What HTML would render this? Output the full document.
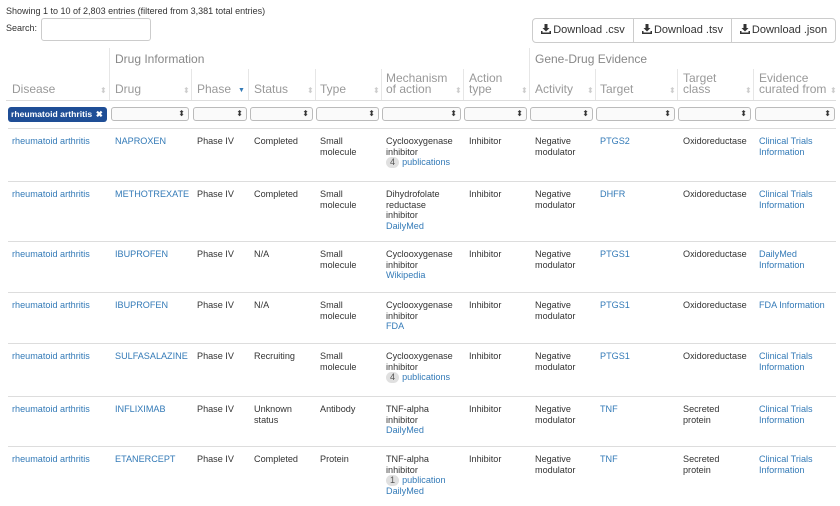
<!DOCTYPE html><html><head><style>
*{margin:0;padding:0;box-sizing:border-box}
body{width:840px;height:503px;overflow:hidden;background:#fff;font-family:"Liberation Sans",sans-serif;color:#333;position:relative;font-size:10px}
.a{position:absolute}
a{color:#337ab7;text-decoration:none}
.row{position:absolute;left:8px;width:828px;border-top:1px solid #ddd}
.c{position:absolute;top:7px;line-height:10.7px;font-size:9.1px;white-space:nowrap}
.h{position:absolute;font-size:12px;color:#999;line-height:11px}
.grp{position:absolute;top:52px;font-size:12px;color:#888}
.vl{position:absolute;width:1px;background:#e6e6e6}
.sel{position:absolute;top:107px;height:14px;border:1px solid #bbb;border-radius:3px;background:#fafafa}
.sel:after{content:"\2B0D";position:absolute;right:3px;top:0px;font-size:8px;color:#333;line-height:12px}
.so{position:absolute;top:86px;font-size:8px;color:#ccc}
.badge{display:inline-block;background:#e0e0e0;border-radius:7px;padding:0 4px;color:#555;margin-right:3px;line-height:11px}
.btn{position:absolute;top:18px;height:25px;border:1px solid #ccc;background:#fff;font-size:11px;line-height:23px;text-align:center;color:#333}
.btn svg{vertical-align:-1px;margin-right:2px}
</style></head><body>
<div class="a" style="left:6px;top:6px;font-size:9px">Showing 1 to 10 of 2,803 entries (filtered from 3,381 total entries)</div>
<div class="a" style="left:6px;top:23px;font-size:9px">Search:</div>
<div class="a" style="left:41px;top:18px;width:110px;height:23px;border:1px solid #ccc;border-radius:3px"></div>
<div class="btn" style="left:532px;width:102px;border-radius:4px 0 0 4px"><svg width="10" height="10" viewBox="0 0 10 10"><path d="M3.5 0h3v4h2L5 7.5 1.5 4h2z" fill="#333"/><path d="M0 7h1.5v1.5h7V7H10v3H0z" fill="#333"/></svg>Download .csv</div>
<div class="btn" style="left:633px;width:99px"><svg width="10" height="10" viewBox="0 0 10 10"><path d="M3.5 0h3v4h2L5 7.5 1.5 4h2z" fill="#333"/><path d="M0 7h1.5v1.5h7V7H10v3H0z" fill="#333"/></svg>Download .tsv</div>
<div class="btn" style="left:731px;width:105px;border-radius:0 4px 4px 0"><svg width="10" height="10" viewBox="0 0 10 10"><path d="M3.5 0h3v4h2L5 7.5 1.5 4h2z" fill="#333"/><path d="M0 7h1.5v1.5h7V7H10v3H0z" fill="#333"/></svg>Download .json</div>
<div class="vl" style="left:109px;top:48px;height:53px"></div>
<div class="vl" style="left:529px;top:48px;height:53px"></div>
<div class="vl" style="left:191px;top:69px;height:32px"></div>
<div class="vl" style="left:248px;top:69px;height:32px"></div>
<div class="vl" style="left:315px;top:69px;height:32px"></div>
<div class="vl" style="left:381px;top:69px;height:32px"></div>
<div class="vl" style="left:463px;top:69px;height:32px"></div>
<div class="vl" style="left:595px;top:69px;height:32px"></div>
<div class="vl" style="left:677px;top:69px;height:32px"></div>
<div class="vl" style="left:753px;top:69px;height:32px"></div>
<div class="grp" style="left:115px">Drug Information</div>
<div class="grp" style="left:535px">Gene-Drug Evidence</div>
<div class="h" style="left:12px;top:84px">Disease</div>
<div class="h" style="left:115px;top:84px">Drug</div>
<div class="h" style="left:197px;top:84px">Phase</div>
<div class="h" style="left:254px;top:84px">Status</div>
<div class="h" style="left:320px;top:84px">Type</div>
<div class="h" style="left:386px;top:73px">Mechanism<br>of action</div>
<div class="h" style="left:469px;top:73px">Action<br>type</div>
<div class="h" style="left:535px;top:84px">Activity</div>
<div class="h" style="left:600px;top:84px">Target</div>
<div class="h" style="left:683px;top:73px">Target<br>class</div>
<div class="h" style="left:759px;top:73px">Evidence<br>curated from</div>
<div class="so" style="left:100px">⬍</div><div class="so" style="left:183px">⬍</div><div class="a" style="left:238px;top:87px;font-size:7px;color:#337ab7">▼</div><div class="so" style="left:307px">⬍</div><div class="so" style="left:373px">⬍</div><div class="so" style="left:455px">⬍</div><div class="so" style="left:521px">⬍</div><div class="so" style="left:587px">⬍</div><div class="so" style="left:669px">⬍</div><div class="so" style="left:745px">⬍</div><div class="so" style="left:830px">⬍</div>
<div class="a" style="left:6px;top:100px;width:830px;border-top:1px solid #ddd"></div>
<div class="a" style="left:8px;top:107px;width:99px;height:15px;background:#1f4e96;border-radius:3px;color:#fff;font-size:8.6px;font-weight:bold;line-height:15px;padding-left:3px;white-space:nowrap">rheumatoid arthritis<span style="position:absolute;right:4px">✖</span></div>
<div class="sel" style="left:111px;width:78px"></div>
<div class="sel" style="left:193px;width:54px"></div>
<div class="sel" style="left:250px;width:63px"></div>
<div class="sel" style="left:316px;width:63px"></div>
<div class="sel" style="left:382px;width:79px"></div>
<div class="sel" style="left:464px;width:63px"></div>
<div class="sel" style="left:530px;width:63px"></div>
<div class="sel" style="left:596px;width:79px"></div>
<div class="sel" style="left:678px;width:73px"></div>
<div class="sel" style="left:755px;width:80px"></div>

<div class="row" style="top:128px;height:53px">
<div class="c" style="left:4px"><a>rheumatoid arthritis</a></div><div class="c" style="left:107px"><a>NAPROXEN</a></div><div class="c" style="left:189px">Phase IV</div><div class="c" style="left:246px">Completed</div><div class="c" style="left:312px">Small<br>molecule</div><div class="c" style="left:378px">Cyclooxygenase<br>inhibitor<br><span class="badge">4</span><a>publications</a></div><div class="c" style="left:461px">Inhibitor</div><div class="c" style="left:527px">Negative<br>modulator</div><div class="c" style="left:592px"><a>PTGS2</a></div><div class="c" style="left:675px">Oxidoreductase</div><div class="c" style="left:751px"><a>Clinical Trials<br>Information</a></div></div>

<div class="row" style="top:181px;height:60px">
<div class="c" style="left:4px"><a>rheumatoid arthritis</a></div><div class="c" style="left:107px"><a>METHOTREXATE</a></div><div class="c" style="left:189px">Phase IV</div><div class="c" style="left:246px">Completed</div><div class="c" style="left:312px">Small<br>molecule</div><div class="c" style="left:378px">Dihydrofolate<br>reductase<br>inhibitor<br><a>DailyMed</a></div><div class="c" style="left:461px">Inhibitor</div><div class="c" style="left:527px">Negative<br>modulator</div><div class="c" style="left:592px"><a>DHFR</a></div><div class="c" style="left:675px">Oxidoreductase</div><div class="c" style="left:751px"><a>Clinical Trials<br>Information</a></div></div>

<div class="row" style="top:241px;height:51px">
<div class="c" style="left:4px"><a>rheumatoid arthritis</a></div><div class="c" style="left:107px"><a>IBUPROFEN</a></div><div class="c" style="left:189px">Phase IV</div><div class="c" style="left:246px">N/A</div><div class="c" style="left:312px">Small<br>molecule</div><div class="c" style="left:378px">Cyclooxygenase<br>inhibitor<br><a>Wikipedia</a></div><div class="c" style="left:461px">Inhibitor</div><div class="c" style="left:527px">Negative<br>modulator</div><div class="c" style="left:592px"><a>PTGS1</a></div><div class="c" style="left:675px">Oxidoreductase</div><div class="c" style="left:751px"><a>DailyMed<br>Information</a></div></div>

<div class="row" style="top:292px;height:51px">
<div class="c" style="left:4px"><a>rheumatoid arthritis</a></div><div class="c" style="left:107px"><a>IBUPROFEN</a></div><div class="c" style="left:189px">Phase IV</div><div class="c" style="left:246px">N/A</div><div class="c" style="left:312px">Small<br>molecule</div><div class="c" style="left:378px">Cyclooxygenase<br>inhibitor<br><a>FDA</a></div><div class="c" style="left:461px">Inhibitor</div><div class="c" style="left:527px">Negative<br>modulator</div><div class="c" style="left:592px"><a>PTGS1</a></div><div class="c" style="left:675px">Oxidoreductase</div><div class="c" style="left:751px"><a>FDA Information</a></div></div>

<div class="row" style="top:343px;height:53px">
<div class="c" style="left:4px"><a>rheumatoid arthritis</a></div><div class="c" style="left:107px"><a>SULFASALAZINE</a></div><div class="c" style="left:189px">Phase IV</div><div class="c" style="left:246px">Recruiting</div><div class="c" style="left:312px">Small<br>molecule</div><div class="c" style="left:378px">Cyclooxygenase<br>inhibitor<br><span class="badge">4</span><a>publications</a></div><div class="c" style="left:461px">Inhibitor</div><div class="c" style="left:527px">Negative<br>modulator</div><div class="c" style="left:592px"><a>PTGS1</a></div><div class="c" style="left:675px">Oxidoreductase</div><div class="c" style="left:751px"><a>Clinical Trials<br>Information</a></div></div>

<div class="row" style="top:396px;height:50px">
<div class="c" style="left:4px"><a>rheumatoid arthritis</a></div><div class="c" style="left:107px"><a>INFLIXIMAB</a></div><div class="c" style="left:189px">Phase IV</div><div class="c" style="left:246px">Unknown<br>status</div><div class="c" style="left:312px">Antibody</div><div class="c" style="left:378px">TNF-alpha<br>inhibitor<br><a>DailyMed</a></div><div class="c" style="left:461px">Inhibitor</div><div class="c" style="left:527px">Negative<br>modulator</div><div class="c" style="left:592px"><a>TNF</a></div><div class="c" style="left:675px">Secreted<br>protein</div><div class="c" style="left:751px"><a>Clinical Trials<br>Information</a></div></div>

<div class="row" style="top:446px;height:60px">
<div class="c" style="left:4px"><a>rheumatoid arthritis</a></div><div class="c" style="left:107px"><a>ETANERCEPT</a></div><div class="c" style="left:189px">Phase IV</div><div class="c" style="left:246px">Completed</div><div class="c" style="left:312px">Protein</div><div class="c" style="left:378px">TNF-alpha<br>inhibitor<br><span class="badge">1</span><a>publication</a><br><a>DailyMed</a></div><div class="c" style="left:461px">Inhibitor</div><div class="c" style="left:527px">Negative<br>modulator</div><div class="c" style="left:592px"><a>TNF</a></div><div class="c" style="left:675px">Secreted<br>protein</div><div class="c" style="left:751px"><a>Clinical Trials<br>Information</a></div></div>
</body></html>
